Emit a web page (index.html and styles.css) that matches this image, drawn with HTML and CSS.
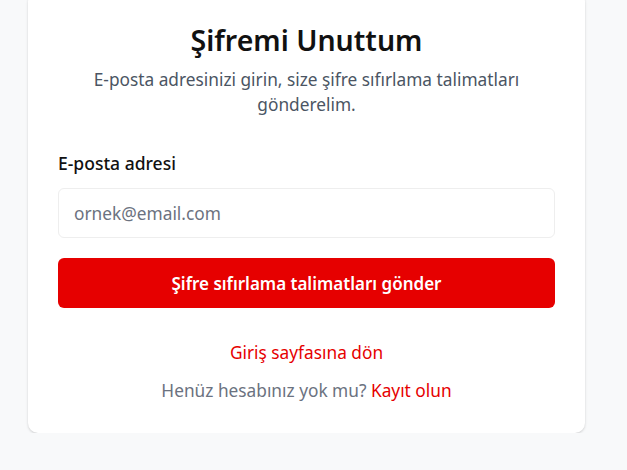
FILE: index.html
```html
<!DOCTYPE html>
<html lang="tr">
<head>
<meta charset="utf-8">
<title>Şifremi Unuttum</title>
<link rel="stylesheet" href="styles.css">
</head>
<body>
<div class="page">
  <div class="card">
    <h1 class="title">Şifremi Unuttum</h1>
    <p class="subtitle">E-posta adresinizi girin, size şifre sıfırlama talimatları gönderelim.</p>
    <form class="form">
      <label class="label" for="email">E-posta adresi</label>
      <input class="input" id="email" type="email" placeholder="ornek@email.com">
      <button class="button" type="button">Şifre sıfırlama talimatları gönder</button>
    </form>
    <div class="links">
      <a class="link" href="#">Giriş sayfasına dön</a>
      <p class="signup">Henüz hesabınız yok mu? <a class="link" href="#">Kayıt olun</a></p>
    </div>
  </div>
</div>
</body>
</html>
```
FILE: styles.css
```css
* { box-sizing: border-box; }
html, body {
  margin: 0;
  padding: 0;
  background: #f8f9fa;
  font-family: "Noto Sans", "Open Sans", sans-serif;
}
.page {
  padding: 0 42px 0 28px;
}
.card {
  margin-top: -8px;
  background: #ffffff;
  border-radius: 10px;
  box-shadow: 0 1px 3px rgba(0,0,0,0.12), 0 1px 2px rgba(0,0,0,0.06);
  padding: 30px;
  display: flex;
  flex-direction: column;
}
.title {
  margin: 0;
  font-size: 28.5px;
  line-height: 36px;
  font-weight: 600;
  color: #111111;
  text-align: center;
}
.subtitle {
  margin: 9px 0 0;
  font-size: 17.3px;
  line-height: 25px;
  color: #4b5563;
  text-align: center;
}
.form {
  margin-top: 34px;
  display: flex;
  flex-direction: column;
}
.label {
  font-size: 17.5px;
  line-height: 25px;
  font-weight: 500;
  color: #111111;
}
.input {
  margin-top: 12px;
  height: 50px;
  border: 1px solid #eeeeee;
  border-radius: 6px;
  padding: 0 15px;
  font-family: inherit;
  font-size: 17.3px;
  color: #111111;
  background: #ffffff;
  outline: none;
}
.input::placeholder { color: #6b7280; }
.button {
  margin-top: 20px;
  height: 50px;
  border: none;
  border-radius: 6px;
  background: #e60000;
  color: #ffffff;
  font-family: inherit;
  font-size: 17px;
  font-weight: 600;
  cursor: pointer;
}
.links {
  margin-top: 32px;
  display: flex;
  flex-direction: column;
  align-items: center;
  gap: 12.5px;
  font-size: 17.3px;
  line-height: 25px;
}
.link {
  color: #e60000;
  text-decoration: none;
}
.signup {
  margin: 0;
  color: #6b7280;
}
```
